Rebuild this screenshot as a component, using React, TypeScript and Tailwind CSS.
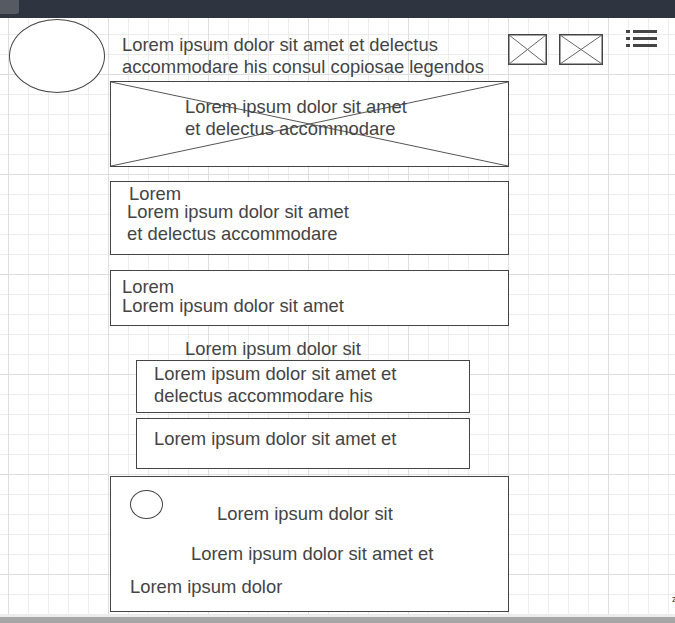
import React from "react";

function XBox({ w, h }: { w: number; h: number }) {
  return (
    <svg width={w} height={h} viewBox={`0 0 ${w} ${h}`} className="block shrink-0">
      <rect x="0.75" y="0.75" width={w - 1.5} height={h - 1.5} fill="white" stroke="#444" strokeWidth="1.5" />
      <line x1="1" y1="1" x2={w - 1} y2={h - 1} stroke="#666" strokeWidth="1" />
      <line x1={w - 1} y1="1" x2="1" y2={h - 1} stroke="#666" strokeWidth="1" />
    </svg>
  );
}

function ListIcon() {
  return (
    <svg width="32" height="18" viewBox="0 0 32 18" className="block shrink-0">
      <rect x="0" y="0" width="4" height="3" fill="#444" />
      <rect x="7" y="0" width="24" height="3" fill="#444" />
      <rect x="0" y="7" width="4" height="3" fill="#444" />
      <rect x="7" y="7" width="24" height="3" fill="#444" />
      <rect x="0" y="14" width="4" height="3" fill="#444" />
      <rect x="7" y="14" width="24" height="3" fill="#444" />
    </svg>
  );
}

export default function App() {
  return (
    <div className="relative w-[675px] h-[623px] overflow-hidden bg-white font-['Liberation_Sans',Arial,sans-serif] text-[18.4px] leading-[22px] text-[#444] bg-[image:linear-gradient(to_right,#dedede_1px,transparent_1px),linear-gradient(to_bottom,#dedede_1px,transparent_1px),linear-gradient(to_right,#ececec_1px,transparent_1px),linear-gradient(to_bottom,#ececec_1px,transparent_1px)] bg-[size:100px_100px,100px_100px,20px_20px,20px_20px] bg-[position:8px_74px,8px_74px,8px_14px,8px_14px]">
      {/* top bar */}
      <div className="h-[18px] bg-[#2e3440] flex items-start">
        <div className="w-[19px] h-[14px] bg-[#565a62] rounded-br-[3px]" />
      </div>

      {/* header row */}
      <div className="flex items-start h-[63px]">
        <div className="ml-[9px] mt-[1px] w-[96px] h-[74px] shrink-0 rounded-[50%] border border-[#444] bg-white" />
        <div className="ml-[17px] mt-[16px] w-[386px] shrink-0 whitespace-nowrap">
          <div>Lorem ipsum dolor sit amet et delectus</div>
          <div>accommodare his consul copiosae legendos</div>
        </div>
        <div className="mt-[16px] flex items-start">
          <XBox w={39} h={31} />
          <div className="ml-[12px]">
            <XBox w={44} h={31} />
          </div>
        </div>
        <div className="ml-[23px] mt-[12px]">
          <ListIcon />
        </div>
      </div>

      {/* boxes column */}
      <div className="ml-[110px] w-[399px] flex flex-col items-start">
        {/* box 1 with X */}
        <div className="relative w-[399px] h-[86px] border border-[#444] bg-white">
          <svg className="absolute inset-0 w-full h-full" viewBox="0 0 397 84" preserveAspectRatio="none">
            <line x1="0" y1="0" x2="397" y2="84" stroke="#555" strokeWidth="1" />
            <line x1="397" y1="0" x2="0" y2="84" stroke="#555" strokeWidth="1" />
          </svg>
          <div className="relative pl-[74px] pt-[14px] whitespace-nowrap">
            <div>Lorem ipsum dolor sit amet</div>
            <div>et delectus accommodare</div>
          </div>
        </div>

        {/* box 2 */}
        <div className="mt-[14px] w-[399px] h-[74px] border border-[#444] bg-white pt-[1px] whitespace-nowrap">
          <div className="pl-[18px] h-[18px]">Lorem</div>
          <div className="pl-[16px]">
            <div>Lorem ipsum dolor sit amet</div>
            <div>et delectus accommodare</div>
          </div>
        </div>

        {/* box 3 */}
        <div className="mt-[15px] w-[399px] h-[56px] border border-[#444] bg-white pt-[5px] pl-[11px] whitespace-nowrap">
          <div className="h-[19px]">Lorem</div>
          <div>Lorem ipsum dolor sit amet</div>
        </div>

        {/* label */}
        <div className="mt-[12px] ml-[75px] whitespace-nowrap">Lorem ipsum dolor sit</div>

        {/* box 4 */}
        <div className="ml-[26px] w-[334px] h-[53px] border border-[#444] bg-white pt-[2px] pl-[17px] whitespace-nowrap">
          <div>Lorem ipsum dolor sit amet et</div>
          <div>delectus accommodare his</div>
        </div>

        {/* box 5 */}
        <div className="mt-[5px] ml-[26px] w-[334px] h-[51px] border border-[#444] bg-white pt-[9px] pl-[17px] whitespace-nowrap">
          <div>Lorem ipsum dolor sit amet et</div>
        </div>

        {/* box 6 */}
        <div className="mt-[7px] w-[399px] h-[136px] border border-[#444] bg-white whitespace-nowrap">
          <div className="flex items-start">
            <div className="ml-[19px] mt-[13px] w-[33px] h-[29px] shrink-0 rounded-[50%] border border-[#444]" />
            <div className="ml-[54px] mt-[26px]">Lorem ipsum dolor sit</div>
          </div>
          <div className="mt-[18px] pl-[80px]">Lorem ipsum dolor sit amet et</div>
          <div className="mt-[11px] pl-[19px]">Lorem ipsum dolor</div>
        </div>
      </div>

      {/* tiny glyph at canvas edge */}
      <div className="absolute left-[672px] top-[594px] text-[9px] leading-[10px] text-[#333]">z</div>

      {/* bottom scrollbar */}
      <div className="absolute left-0 right-0 bottom-0 h-[9px] flex flex-col">
        <div className="h-[3px] bg-[#ececec]" />
        <div className="flex-1 bg-[#a6a6a6]" />
      </div>
    </div>
  );
}
